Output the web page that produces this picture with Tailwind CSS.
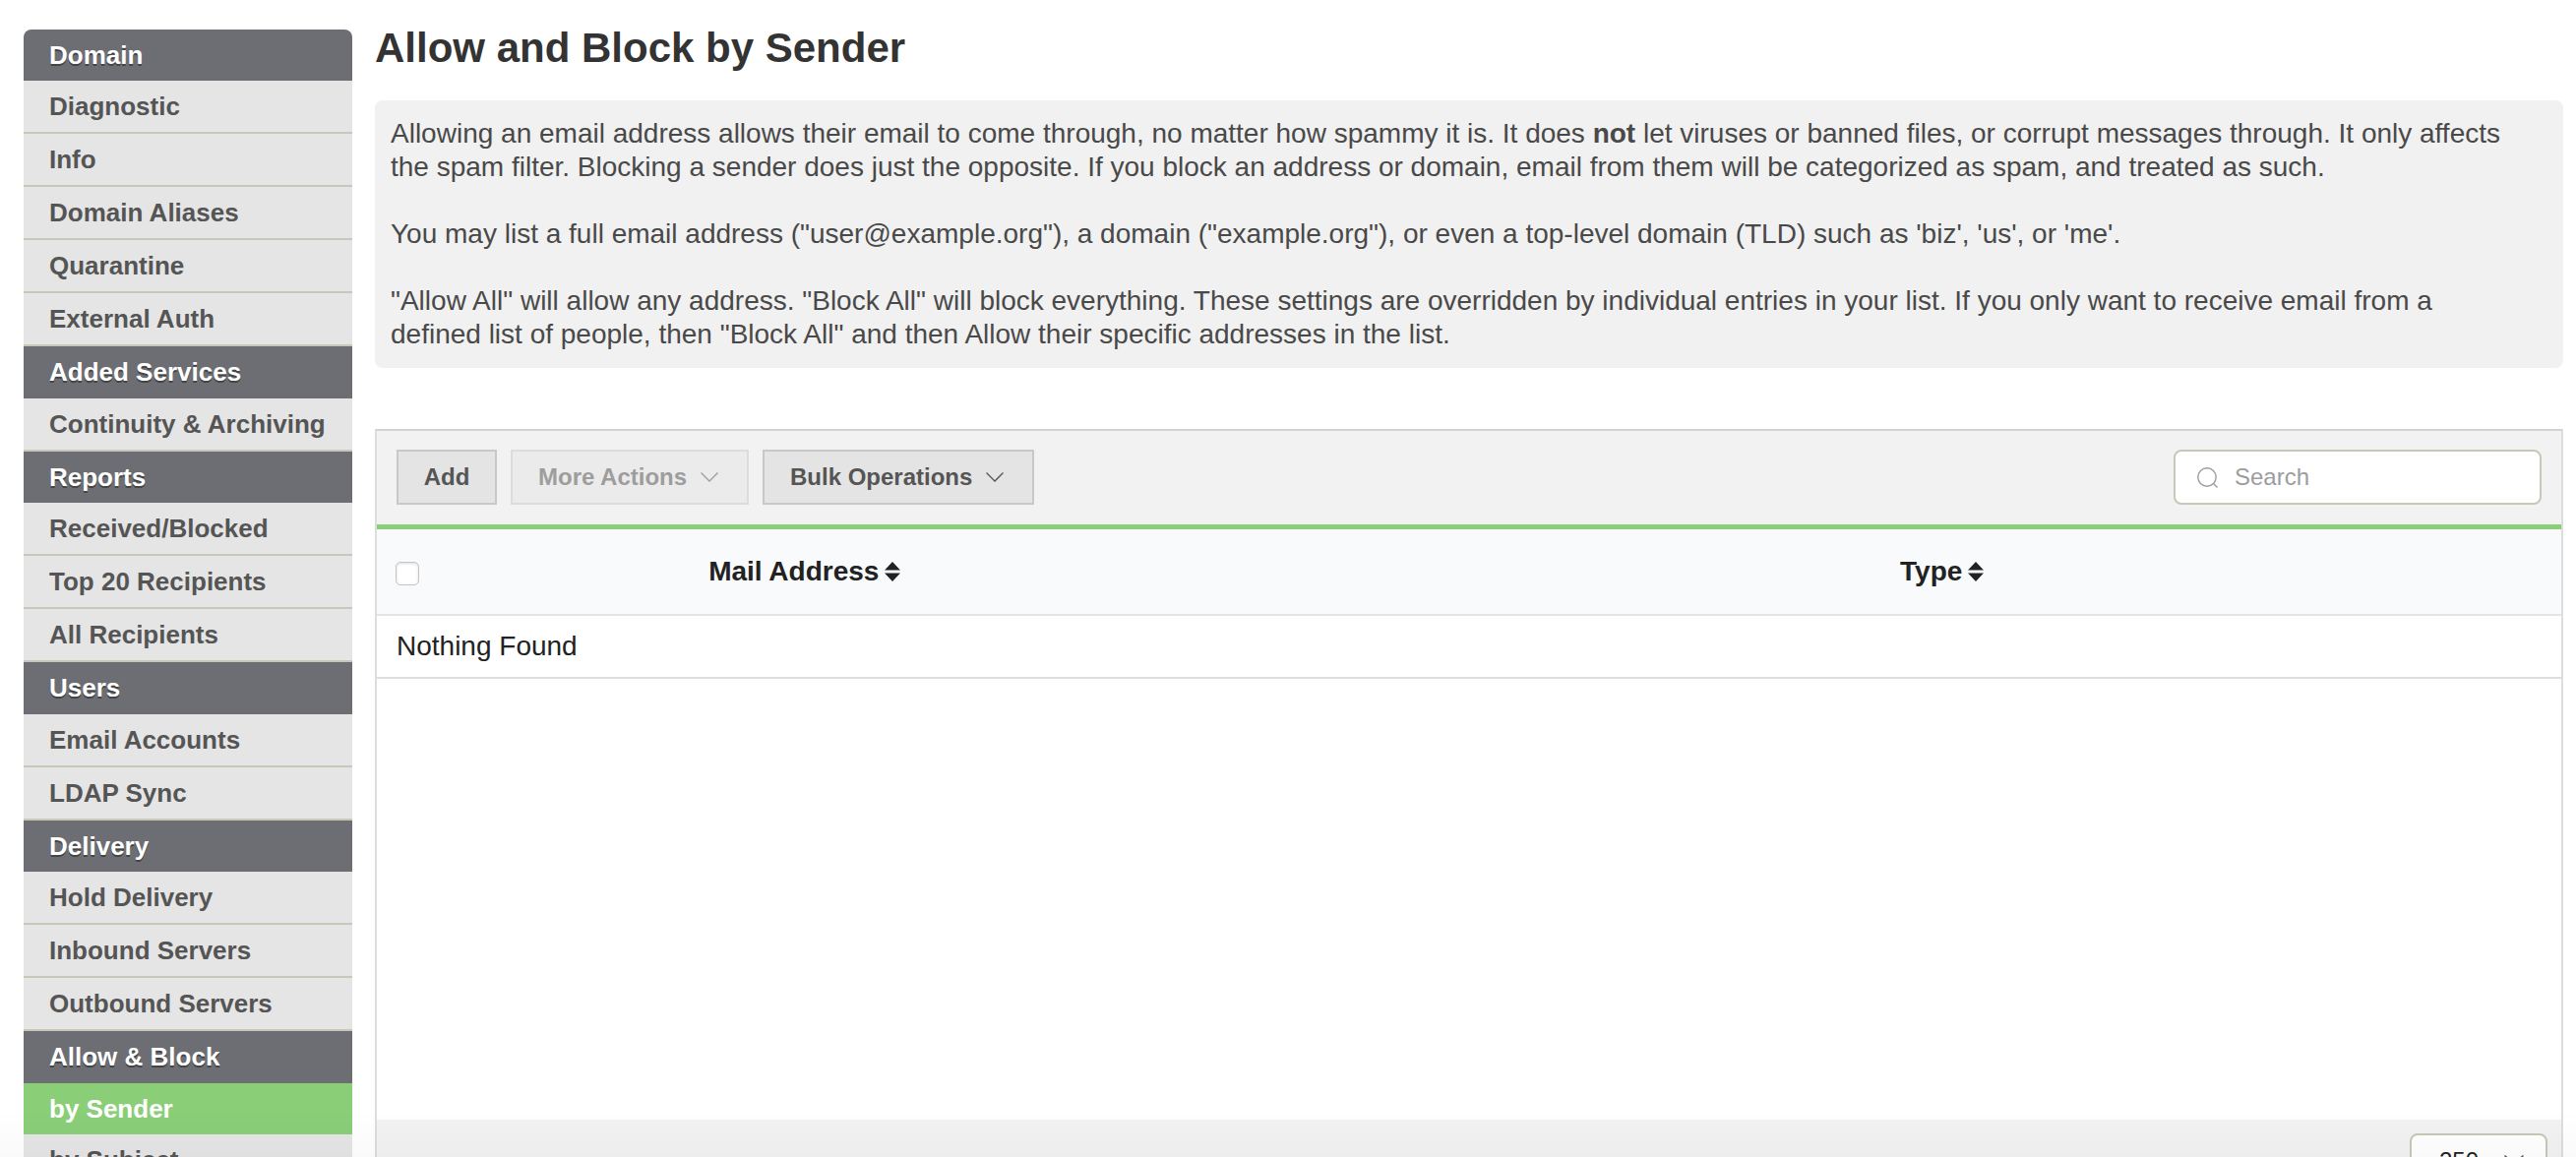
<!DOCTYPE html>
<html lang="en">
<head>
<meta charset="utf-8">
<meta name="viewport" content="width=device-width, initial-scale=1">
<title>Allow and Block by Sender</title>
<script src="https://cdn.jsdelivr.net/npm/@tailwindcss/browser@4"></script>
</head>
<body class="h-screen overflow-hidden bg-white font-['Helvetica_Neue','Liberation_Sans',Arial,sans-serif] text-[#444]">
<div class="flex items-start gap-[23px] pr-[13px] pl-6">

  <nav aria-label="Domain settings" class="mt-[30px] w-[334px] shrink-0 overflow-hidden rounded-t-lg bg-[#e5e5e5] text-[26px] leading-[52px] font-bold text-[#555]">
    <h2 class="h-[52px] bg-[#6d6e73] pl-[26px] text-white text-shadow-[0_2px_0_#444]">Domain</h2>
    <ul>
      <li class="border-b-2 border-[#c9c7b8]"><a href="#" class="block pl-[26px]">Diagnostic</a></li>
      <li class="border-b-2 border-[#c9c7b8]"><a href="#" class="block pl-[26px]">Info</a></li>
      <li class="border-b-2 border-[#c9c7b8]"><a href="#" class="block pl-[26px]">Domain Aliases</a></li>
      <li class="border-b-2 border-[#c9c7b8]"><a href="#" class="block pl-[26px]">Quarantine</a></li>
      <li class="border-b-2 border-[#c9c7b8]"><a href="#" class="block pl-[26px]">External Auth</a></li>
    </ul>
    <h2 class="h-[53px] bg-[#6d6e73] pl-[26px] text-white text-shadow-[0_2px_0_#444]">Added Services</h2>
    <ul>
      <li class="border-b-2 border-[#c9c7b8]"><a href="#" class="block pl-[26px]">Continuity &amp; Archiving</a></li>
    </ul>
    <h2 class="h-[52px] bg-[#6d6e73] pl-[26px] text-white text-shadow-[0_2px_0_#444]">Reports</h2>
    <ul>
      <li class="border-b-2 border-[#c9c7b8]"><a href="#" class="block pl-[26px]">Received/Blocked</a></li>
      <li class="border-b-2 border-[#c9c7b8]"><a href="#" class="block pl-[26px]">Top 20 Recipients</a></li>
      <li class="border-b-2 border-[#c9c7b8]"><a href="#" class="block pl-[26px]">All Recipients</a></li>
    </ul>
    <h2 class="h-[53px] bg-[#6d6e73] pl-[26px] text-white text-shadow-[0_2px_0_#444]">Users</h2>
    <ul>
      <li class="border-b-2 border-[#c9c7b8]"><a href="#" class="block pl-[26px]">Email Accounts</a></li>
      <li class="border-b-2 border-[#c9c7b8]"><a href="#" class="block pl-[26px]">LDAP Sync</a></li>
    </ul>
    <h2 class="h-[52px] bg-[#6d6e73] pl-[26px] text-white text-shadow-[0_2px_0_#444]">Delivery</h2>
    <ul>
      <li class="border-b-2 border-[#c9c7b8]"><a href="#" class="block pl-[26px]">Hold Delivery</a></li>
      <li class="border-b-2 border-[#c9c7b8]"><a href="#" class="block pl-[26px]">Inbound Servers</a></li>
      <li class="border-b-2 border-[#c9c7b8]"><a href="#" class="block pl-[26px]">Outbound Servers</a></li>
    </ul>
    <h2 class="h-[53px] bg-[#6d6e73] pl-[26px] text-white text-shadow-[0_2px_0_#444]">Allow &amp; Block</h2>
    <ul>
      <li><a href="#" aria-current="page" class="block bg-[#8bce78] pl-[26px] text-white">by Sender</a></li>
      <li class="border-b-2 border-[#c9c7b8]"><a href="#" class="block pl-[26px]">by Subject</a></li>
    </ul>
  </nav>

  <main class="min-w-0 grow pt-6">
    <h1 class="text-[42px] leading-[50px] font-bold text-[#333]">Allow and Block by Sender</h1>

    <div class="mt-7 space-y-[34px] rounded-lg bg-[#f1f1f1] py-[17px] pr-[46px] pl-4 text-[28px] leading-[34px] text-[#494949]">
      <p>Allowing an email address allows their email to come through, no matter how spammy it is. It does <b>not</b> let viruses or banned files, or corrupt messages through. It only affects the spam filter. Blocking a sender does just the opposite. If you block an address or domain, email from them will be categorized as spam, and treated as such.</p>
      <p>You may list a full email address ("user@example.org"), a domain ("example.org"), or even a top-level domain (TLD) such as 'biz', 'us', or 'me'.</p>
      <p>"Allow All" will allow any address. "Block All" will block everything. These settings are overridden by individual entries in your list. If you only want to receive email from a defined list of people, then "Block All" and then Allow their specific addresses in the list.</p>
    </div>

    <section class="mt-[62px] border-2 border-[#ddd] border-t-[#d2d2d2]">
      <div class="flex h-[100px] items-center justify-between border-b-[5px] border-[#8bce78] bg-[#f2f2f2] px-5 pb-px">
        <div class="flex gap-[14px] text-[24px] leading-[52px] font-bold text-[#555]">
          <button type="button" class="w-[102px] border-2 border-[#c8c8c8] bg-[#e4e4e4]">Add</button>
          <button type="button" disabled class="flex w-[242px] items-center justify-between border-2 border-[#dcdcdc] bg-[#ebebeb] pr-[29px] pl-[26px] text-[#9d9d9d]">More Actions
            <svg class="h-[10px] w-[18px]" viewBox="0 0 18 10" fill="none" stroke="currentColor" stroke-width="1.3"><path d="M.5.5 9 9 17.5.5"/></svg>
          </button>
          <button type="button" class="flex w-[276px] items-center justify-between border-2 border-[#c8c8c8] bg-[#e4e4e4] pr-[29px] pl-[26px]">Bulk Operations
            <svg class="h-[10px] w-[18px]" viewBox="0 0 18 10" fill="none" stroke="currentColor" stroke-width="1.3"><path d="M.5.5 9 9 17.5.5"/></svg>
          </button>
        </div>
        <label class="flex h-14 w-[374px] items-center gap-[17px] rounded-lg border-2 border-[#c9c7b8] bg-white pr-4 pl-[22px] text-[#9d9d9d]">
          <svg class="h-[21px] w-[21px] shrink-0" viewBox="0 0 21 21" fill="none" stroke="currentColor" stroke-width="1.4"><circle cx="10" cy="10" r="9.2"/><path d="m16.5 16.5 4 4"/></svg>
          <input type="search" aria-label="Search" placeholder="Search" class="w-full min-w-0 text-[24px] leading-8 outline-none placeholder:text-[#9d9d9d]">
        </label>
      </div>

      <div class="min-h-[600px]">
        <table class="w-full table-fixed text-left text-[28px] leading-[34px] text-[#222]">
          <colgroup><col class="w-1/7"><col class="w-6/11"><col><col class="w-[41px]"></colgroup>
          <thead>
            <tr class="h-[87px] border-b-2 border-[#e2e5e8] bg-[#f9fafc]">
              <th class="pl-[19px]"><input type="checkbox" aria-label="Select all" class="mt-1 block size-6 appearance-none rounded-[5px] border border-[#c4c4c4] bg-white inset-shadow-[0_1px_3px_#ddd]"></th>
              <th class="px-5"><button type="button" class="flex items-center gap-[6px] font-bold">Mail Address
                <svg class="h-5 w-4" viewBox="0 0 16 20" fill="currentColor"><path d="M8 0 16 8.500H0zM8 20 0 11.500h16z"/></svg></button></th>
              <th class="px-5"><button type="button" class="flex items-center gap-[6px] font-bold">Type
                <svg class="h-5 w-4" viewBox="0 0 16 20" fill="currentColor"><path d="M8 0 16 8.500H0zM8 20 0 11.500h16z"/></svg></button></th>
              <th></th>
            </tr>
          </thead>
          <tbody>
            <tr class="h-16 border-b-2 border-[#ddd]"><td colspan="4" class="px-5">Nothing Found</td></tr>
          </tbody>
        </table>
      </div>

      <footer class="flex justify-end bg-[#f2f2f2] px-[14px] py-[14px]">
        <div class="relative">
          <select aria-label="Rows per page" class="h-14 w-[140px] appearance-none rounded-lg border-2 border-[#c9c7b8] bg-white pl-7 text-[24px] text-[#222]">
            <option>250</option>
          </select>
          <svg class="pointer-events-none absolute top-[22px] right-[24px] h-[10px] w-[20px] text-[#555]" viewBox="0 0 20 10" fill="none" stroke="currentColor" stroke-width="1.5"><path d="M.5.5 10 9 19.500.5"/></svg>
        </div>
      </footer>
    </section>
  </main>
</div>
<div class="pointer-events-none fixed inset-x-0 bottom-0 h-12 bg-linear-to-b from-transparent to-black/2"></div>
</body>
</html>
